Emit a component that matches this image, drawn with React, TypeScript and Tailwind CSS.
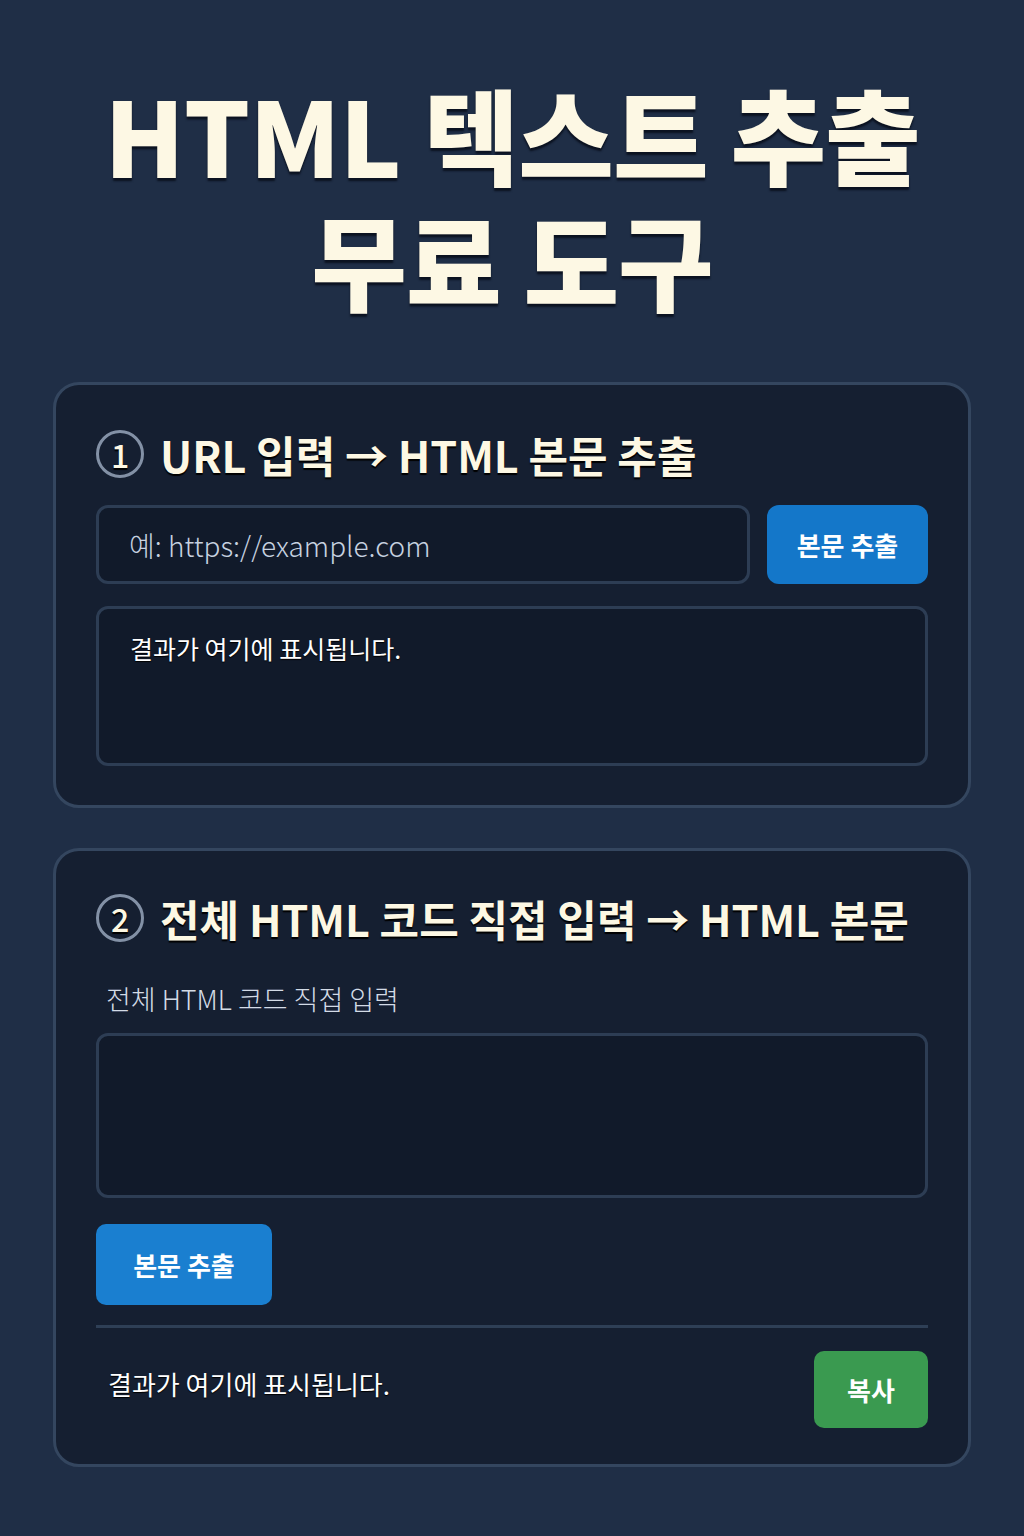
import React from 'react';

const font = { fontFamily: '"Noto Sans CJK KR", "Noto Sans", sans-serif' };

const CircleNum = ({ n }: { n: string }) => (
    <span className="inline-flex h-[48px] w-[48px] shrink-0 items-center justify-center rounded-full border-[3px] border-[#8391a6] text-[32px] font-medium leading-none text-[#fdf8e4]">
        {n}
    </span>
);

const App: React.FC = () => {
    return (
        <div style={font} className="min-h-[1536px] w-full bg-[#1f2e46] px-[53px] pt-[70px] pb-[70px]">
            <h1 className="text-center text-[104px] font-black leading-[126px] tracking-[-1px] text-[#fdf8e4] [text-shadow:0_3px_2px_#0b1220]">
                <div>HTML 텍스트 추출</div>
                <div>무료 도구</div>
            </h1>

            {/* Card 1: URL */}
            <section className="mt-[60px] rounded-[26px] border-[3px] border-[#34465f] bg-[#151f31] px-[40px] pt-[45px] pb-[39px]">
                <h2 className="flex items-center gap-[16px] text-[43px] font-bold leading-none text-[#fdf8e4] [text-shadow:0_2px_1px_#000]">
                    <CircleNum n="1" />
                    <span>URL 입력 → HTML 본문 추출</span>
                </h2>
                <div className="mt-[27px] flex gap-[17px]">
                    <div className="flex h-[79px] flex-1 items-center rounded-[12px] border-[3px] border-[#2d3d54] bg-[#111a2a] px-[30px] text-[28px] font-light text-[#c7d2e0]">
                        예: https://example.com
                    </div>
                    <button className="h-[79px] w-[161px] rounded-[12px] bg-[#1477c9] text-[26px] font-bold text-white">
                        본문 추출
                    </button>
                </div>
                <div className="mt-[22px] h-[160px] rounded-[12px] border-[3px] border-[#2d3d54] bg-[#111a2a] px-[31px] pt-[21px] text-[25px] text-white [text-shadow:0_1px_1px_#000]">
                    결과가 여기에 표시됩니다.
                </div>
            </section>

            {/* Card 2: direct HTML */}
            <section className="mt-[40px] rounded-[26px] border-[3px] border-[#34465f] bg-[#151f31] px-[40px] pt-[43px] pb-[36px]">
                <h2 className="flex items-center gap-[16px] text-[43px] font-bold leading-none text-[#fdf8e4] [text-shadow:0_2px_1px_#000]">
                    <CircleNum n="2" />
                    <span>전체 HTML 코드 직접 입력 → HTML 본문</span>
                </h2>
                <p className="mt-[43px] pl-[10px] text-[27px] font-light leading-none text-[#d3dbe6]">전체 HTML 코드 직접 입력</p>
                <div className="mt-[21px] h-[165px] rounded-[12px] border-[3px] border-[#2d3d54] bg-[#111a2a]" />
                <button className="mt-[26px] h-[81px] w-[176px] rounded-[10px] bg-[#1a7fd0] text-[26px] font-bold text-white">
                    본문 추출
                </button>
                <div className="mt-[20px] h-[3px] bg-[#2e3f56]" />
                <div className="mt-[23px] flex items-start justify-between">
                    <p className="pl-[12px] pt-[13px] text-[26px] text-white [text-shadow:0_1px_1px_#000]">결과가 여기에 표시됩니다.</p>
                    <button className="h-[77px] w-[114px] rounded-[10px] bg-[#3a9a50] text-[26px] font-bold text-white">
                        복사
                    </button>
                </div>
            </section>
        </div>
    );
};

export default App;
